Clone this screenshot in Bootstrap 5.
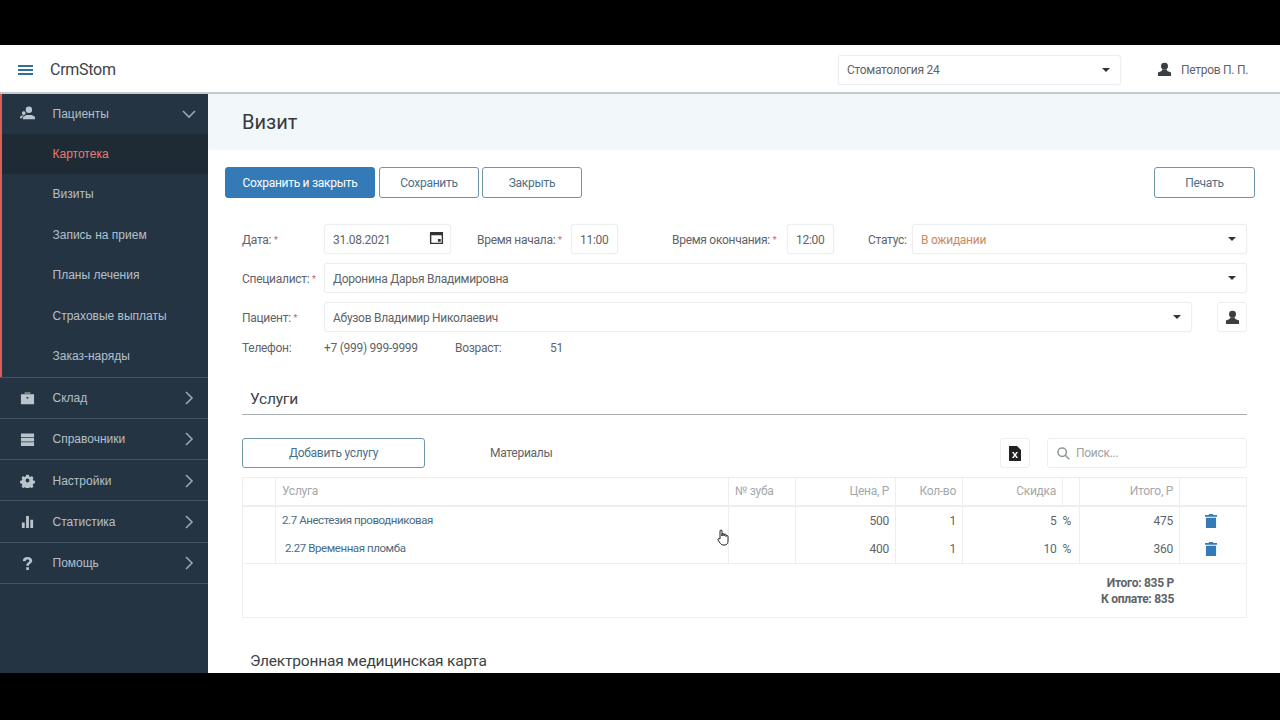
<!DOCTYPE html>
<html lang="ru">
<head>
  <meta charset="UTF-8">
  <meta name="viewport" content="width=device-width, initial-scale=1.0">
  <title>CrmStom - Визит</title>
  <link href="https://cdn.jsdelivr.net/npm/bootstrap@5.3.2/dist/css/bootstrap.min.css" rel="stylesheet">
  <style>
    html, body { height: 720px; overflow: hidden; }
    body { background: #000; font-family: Roboto, "Noto Sans", sans-serif; font-size: 12px; color: #5f6468; letter-spacing: -.28px; }
    .app-frame { position: relative; margin-top: 45px; height: 628px; background: #fff; overflow: hidden; display: flex; flex-direction: column; }
    .top-bar { height: 49px; flex: none; border-bottom: 2px solid #c4c8ca; padding: 2px 32px 0 18px; }
    .burger { width: 15px; height: 10px; border-top: 2px solid #2f6f9f; border-bottom: 2px solid #2f6f9f; position: relative; }
    .burger::after { content: ""; position: absolute; left: 0; right: 0; top: 2px; height: 2px; background: #2f6f9f; }
    .brand-name { margin-left: 17px; font-size: 16px; color: #3c4348; }
    .clinic-select { width: 283px; height: 30px; margin-left: auto; margin-right: 36px; }
    .user-name { width: 67px; margin-left: 9px; color: #5f6468; white-space: nowrap; }
    .work-area { flex: 1; min-height: 0; }
    .side-menu { width: 208px; flex: none; background: #253443; font-family: "Liberation Sans", sans-serif; font-size: 12px; letter-spacing: 0; color: #b4c0ca; }
    .side-group { border-left: 2px solid #dc5e58; }
    .side-item { height: 40.5px; padding-left: 50.5px; }
    .side-item.is-active { background: #1e2a34; color: #ea7b72; }
    .side-top { height: 41.4px; padding: 1px 12px 0 20px; border-bottom: 1px solid #465462; }
    .side-first { height: 42px; border-top: 1px solid #465462; }
    .side-group .side-top { height: 39.5px; border-bottom: 0; padding: 0 12px 0 18px; }
    .side-ico { width: 15px; height: 15px; margin-right: 17.5px; flex: none; fill: #b9c4cd; }
    .side-arrow { margin-left: auto; width: 14px; height: 14px; fill: none; stroke: #9aa7b2; stroke-width: 1.6; }
    .page-body { flex: 1; min-width: 0; }
    .page-title { height: 56px; background: #f2f7fa; padding-left: 34px; font-size: 20px; letter-spacing: 0; color: #33393d; }
    .page-inner { padding: 17px 25px 0 17px; }
    .act-btn { height: 31px; font-size: 12px; letter-spacing: -.28px; padding: 0; border-radius: 3px; border: 1px solid #6f95ac; color: #4a7089; background: #fff; }
    .act-primary { width: 150px; background: #337ab7; border-color: #337ab7; color: #fff; }
    .act-normal { width: 100px; }
    .act-print { width: 101px; }
    .toolbar-close { margin-left: -1px; }
    .form-block { padding: 26px 33px 0 34px; }
    .form-line { margin-bottom: 9px; height: 30px; }
    .form-line label { white-space: nowrap; padding-top: 1px; }
    .form-line .form-control, .form-line .form-select, .clinic-select { font-size: 12px; letter-spacing: -.28px; height: 30px; border: 1px solid #eceeef; border-radius: 3px; padding: 1px 8px 0; color: #5f6468; box-shadow: 0 0 2px #f0f1f2; }
    .form-select, .clinic-select { background-image: url("data:image/svg+xml,%3Csvg xmlns='http://www.w3.org/2000/svg' viewBox='0 0 8 4'%3E%3Cpath fill='%23333' d='M0 0h8L4 4z'/%3E%3C/svg%3E"); background-size: 8px 4px; background-position: right 10px center; }
    .fld-label { width: 82px; flex: none; }
    .req-mark { color: #c9605c; font-size: 9px; vertical-align: 1px; }
    .form-line .date-field { width: 127px; flex: none; padding-right: 6px; }
    .time-field { width: 47px; flex: none; }
    .date-ico { width: 15px; height: 15px; margin-top: -4px; }
    .lbl-start { margin-left: 26px; width: 94px; flex: none; }
    .lbl-end { margin-left: 54px; width: 115px; flex: none; }
    .lbl-status { margin-left: 34px; width: 44px; flex: none; }
    .status-value { color: #c98a5e !important; }
    .person-btn { width: 30px; height: 30px; margin-left: 25px; border: 1px solid #eceeef; border-radius: 3px; background: #fff; padding: 0; flex: none; }
    .info-line { height: 14px; line-height: 14px; }
    .info-phone { width: 131px; }
    .info-age { width: 95px; }
    .sect-head { margin: 33px 33px 0 34px; height: 27px; padding: 2px 0 0 8px; font-size: 15.5px; letter-spacing: -.2px; color: #3c4348; border-bottom: 1px solid #a9adb0; line-height: 18px; }
    .sect-tools { margin: 23px 33px 9px 34px; height: 30px; }
    .add-btn { width: 183px; height: 30px; }
    .mat-link { margin-left: 65px; color: #5f6468; }
    .xls-btn { margin-left: auto; width: 30px; height: 30px; border: 1px solid #eceeef; border-radius: 3px; background: #fff; padding: 0; }
    .search-box { width: 200px; height: 30px; margin-left: 17px; border: 1px solid #eceeef; border-radius: 3px; padding: 0 9px; color: #9da2a5; gap: 6px; }
    .serv-wrap { margin: 0 33px 0 34px; }
    .serv-table { table-layout: fixed; width: 1004px; margin: 0; font-size: 12px; color: #5f6468; border-color: #eceeef; }
    .serv-table th { font-weight: 400; color: #a3a8ab; height: 28px; padding: 0 6px; border: 1px solid #eceeef; border-bottom-width: 2px; vertical-align: middle; }
    .serv-table td { height: 29px; padding: 0 6px; border: 0; border-left: 1px solid #eceeef; border-right: 1px solid #eceeef; vertical-align: middle; }
    .serv-table td.no-right { border-right: 0; }
    .serv-table td.no-left { border-left: 0; padding-left: 0; }
    .serv-table tr.last-row td { border-bottom: 1px solid #eceeef; }
    .serv-table .sum-cell { height: 54px; border: 1px solid #eceeef; padding-right: 72px; font-weight: 700; line-height: 16px; }
    .serv-table td.trash-cell { padding: 0 10px 0 6px; }
    .serv-table td.serv-name { color: #4a6c82; font-size: 11.5px; letter-spacing: -.42px; }
    .serv-indent { padding-left: 3px; }
    .disc-link { color: #4a6c82; }
    .trash-ico { width: 12px; height: 14px; fill: #337ab7; display: block; margin: 0 auto; }
    .emk-head { margin: 34px 0 0 42px; font-size: 15.5px; letter-spacing: -.2px; color: #3c4348; line-height: 18px; }
    .hand-cursor { position: absolute; left: 717px; top: 484px; width: 12px; height: 17px; }
  </style>
</head>
<body>
  <div class="app-frame">
    <header class="top-bar d-flex align-items-center">
      <div class="burger"></div>
      <div class="brand-name">CrmStom</div>
      <select class="form-select clinic-select"><option>Стоматология 24</option></select>
      <svg width="15" height="15" viewBox="0 0 16 16" fill="#3a3f42"><circle cx="8" cy="4.5" r="3.7"/><path d="M5.500 8h5l.5 1.600 4 1.600V15H1v-3.800l4-1.600z"/></svg>
      <span class="user-name">Петров П. П.</span>
    </header>
    <div class="work-area d-flex">
      <nav class="side-menu">
        <div class="side-group">
          <div class="side-top d-flex align-items-center">
            <svg class="side-ico" viewBox="0 0 16 16"><circle cx="9.500" cy="4" r="3.400"/><path d="M3 14v-2l3.500-2.500h6l3.500 2V14z"/><circle cx="4" cy="7.500" r="2"/><path d="M0 13v-1.500l2-1.500h2.500L2 12v1z"/></svg>
            <span>Пациенты</span>
            <svg class="side-arrow" viewBox="0 0 14 14"><path d="M1 4l6 6 6-6"/></svg>
          </div>
          <div class="side-item is-active d-flex align-items-center">Картотека</div>
          <div class="side-item d-flex align-items-center">Визиты</div>
          <div class="side-item d-flex align-items-center">Запись на прием</div>
          <div class="side-item d-flex align-items-center">Планы лечения</div>
          <div class="side-item d-flex align-items-center">Страховые выплаты</div>
          <div class="side-item d-flex align-items-center">Заказ-наряды</div>
        </div>
        <div class="side-top side-first d-flex align-items-center">
          <svg class="side-ico" viewBox="0 0 16 16"><path d="M5 3V1.500h6V3h-1.200v-.4H6.200V3zM1 3.500h14V14H1zM7 6.500v1.500h2V6.500z"/></svg>
          <span>Склад</span>
          <svg class="side-arrow" viewBox="0 0 14 14"><path d="M4 1l6 6-6 6"/></svg>
        </div>
        <div class="side-top d-flex align-items-center">
          <svg class="side-ico" viewBox="0 0 16 16"><path d="M1 1.500h14v4H1zM1 6.500h14v3.500H1zM1 11h14v4H1z"/></svg>
          <span>Справочники</span>
          <svg class="side-arrow" viewBox="0 0 14 14"><path d="M4 1l6 6-6 6"/></svg>
        </div>
        <div class="side-top d-flex align-items-center">
          <svg class="side-ico" viewBox="0 0 16 16"><path fill-rule="evenodd" d="M6.500 1h3l.4 2 1.500.7 1.800-1 2 2-1 1.800.7 1.500 2 .4v3l-2 .4-.7 1.500 1 1.800-2 2-1.800-1-1.500.7-.4 2h-3l-.4-2-1.500-.7-1.800 1-2-2 1-1.800-.7-1.500-2-.4v-3l2-.4.7-1.500-1-1.800 2-2 1.800 1 1.500-.7zM8 5.700a2.300 2.300 0 1 0 0 4.600 2.300 2.300 0 0 0 0-4.600z" transform="translate(.9 .9) scale(.89)"/></svg>
          <span>Настройки</span>
          <svg class="side-arrow" viewBox="0 0 14 14"><path d="M4 1l6 6-6 6"/></svg>
        </div>
        <div class="side-top d-flex align-items-center">
          <svg class="side-ico" viewBox="0 0 16 16"><path d="M2 9h3v6H2zM6.500 2h3v13h-3zM11 6h3v9h-3z"/></svg>
          <span>Статистика</span>
          <svg class="side-arrow" viewBox="0 0 14 14"><path d="M4 1l6 6-6 6"/></svg>
        </div>
        <div class="side-top d-flex align-items-center">
          <svg class="side-ico" viewBox="0 0 16 16"><path d="M3 5.200C3 2.500 5 1 8 1s5 1.500 5 3.900c0 1.800-1 2.600-2.200 3.400-.9.600-1.300 1-1.300 2.200H6.700c0-2 .6-2.800 1.900-3.700.9-.6 1.400-1 1.400-1.800 0-.8-.7-1.300-1.900-1.300-1.300 0-2 .6-2.100 1.800zM6.700 12h2.800v3H6.700z"/></svg>
          <span>Помощь</span>
          <svg class="side-arrow" viewBox="0 0 14 14"><path d="M4 1l6 6-6 6"/></svg>
        </div>
      </nav>
      <main class="page-body">
        <div class="page-title d-flex align-items-center">Визит</div>
        <div class="page-inner d-flex gap-1">
          <button class="btn act-btn act-primary">Сохранить и закрыть</button>
          <button class="btn act-btn act-normal">Сохранить</button>
          <button class="btn act-btn act-normal toolbar-close">Закрыть</button>
          <button class="btn act-btn act-print ms-auto">Печать</button>
        </div>
        <div class="form-block">
          <div class="form-line d-flex align-items-center">
            <label class="fld-label">Дата: <span class="req-mark">*</span></label>
            <div class="form-control date-field d-flex align-items-center justify-content-between">31.08.2021
              <svg class="date-ico" viewBox="0 0 16 16" fill="#333"><path fill-rule="evenodd" d="M1 2h14v13H1zM2.500 5.500V13.500h11V5.500zM9.500 9.500h3v3h-3z"/></svg>
            </div>
            <label class="lbl-start">Время начала: <span class="req-mark">*</span></label>
            <input class="form-control time-field" value="11:00">
            <label class="lbl-end">Время окончания: <span class="req-mark">*</span></label>
            <input class="form-control time-field" value="12:00">
            <label class="lbl-status">Статус:</label>
            <select class="form-select status-value"><option>В ожидании</option></select>
          </div>
          <div class="form-line d-flex align-items-center">
            <label class="fld-label">Специалист: <span class="req-mark">*</span></label>
            <select class="form-select"><option>Доронина Дарья Владимировна</option></select>
          </div>
          <div class="form-line d-flex align-items-center">
            <label class="fld-label">Пациент: <span class="req-mark">*</span></label>
            <select class="form-select"><option>Абузов Владимир Николаевич</option></select>
            <button class="person-btn"><svg width="15" height="15" viewBox="0 0 16 16" fill="#3a3f42"><circle cx="8" cy="4.500" r="3.700"/><path d="M5.500 8h5l.5 1.600 4 1.600V15H1v-3.800l4-1.600z"/></svg></button>
          </div>
          <div class="info-line d-flex">
            <span class="fld-label">Телефон:</span>
            <span class="info-phone">+7 (999) 999-9999</span>
            <span class="info-age">Возраст:</span>
            <span>51</span>
          </div>
        </div>
        <div class="sect-head">Услуги</div>
        <div class="sect-tools d-flex align-items-center">
          <button class="btn act-btn add-btn">Добавить услугу</button>
          <span class="mat-link">Материалы</span>
          <button class="xls-btn"><svg width="12" height="15" viewBox="0 0 12 15"><path fill="#222" d="M0 0h8l4 4v11H0z"/><path fill="#fff" d="M3 6h1.800L6 8l1.200-2H9L7 9l2 3H7.200L6 10l-1.200 2H3l2-3z"/></svg></button>
          <div class="search-box d-flex align-items-center">
            <svg width="13" height="13" viewBox="0 0 13 13" fill="none" stroke="#8f9497" stroke-width="1.500"><circle cx="5.200" cy="5.200" r="4.200"/><path d="M8.300 8.300L12.300 12.300"/></svg>
            <span>Поиск...</span>
          </div>
        </div>
        <div class="serv-wrap">
          <table class="table serv-table">
            <colgroup>
              <col style="width:33px"><col style="width:453px"><col style="width:67px"><col style="width:100px"><col style="width:67px"><col style="width:100px"><col style="width:17px"><col style="width:100px"><col style="width:67px">
            </colgroup>
            <thead>
              <tr>
                <th></th><th>Услуга</th><th>№ зуба</th><th class="text-end">Цена, Р</th><th class="text-end">Кол-во</th><th class="text-end">Скидка</th><th></th><th class="text-end">Итого, Р</th><th></th>
              </tr>
            </thead>
            <tbody>
              <tr>
                <td></td><td class="serv-name">2.7 Анестезия проводниковая</td><td></td><td class="text-end">500</td><td class="text-end">1</td><td class="text-end no-right">5</td><td class="no-left">%</td><td class="text-end">475</td>
                <td class="trash-cell"><svg class="trash-ico" viewBox="0 0 13 15"><path d="M4.500 0h4l.5 1h4v2H0V1h4zM1 4h11v11H1z"/></svg></td>
              </tr>
              <tr class="last-row">
                <td></td><td class="serv-name"><span class="serv-indent">2.27 Временная пломба</span></td><td></td><td class="text-end">400</td><td class="text-end">1</td><td class="text-end no-right disc-link">10</td><td class="no-left">%</td><td class="text-end">360</td>
                <td class="trash-cell"><svg class="trash-ico" viewBox="0 0 13 15"><path d="M4.500 0h4l.5 1h4v2H0V1h4zM1 4h11v11H1z"/></svg></td>
              </tr>
              <tr>
                <td colspan="9" class="sum-cell text-end">Итого: 835 Р<br>К оплате: 835</td>
              </tr>
            </tbody>
          </table>
        </div>
        <div class="emk-head">Электронная медицинская карта</div>
      </main>
    </div>
    <svg class="hand-cursor" viewBox="0 0 12 17" fill="#fff" stroke="#222" stroke-width="1"><path d="M3 9V2a1 1 0 0 1 2 0v5-1.500a1 1 0 0 1 2 0V7v-1a1 1 0 0 1 2 0v1.500a1 1 0 0 1 2 0V12c0 2-1 4-3 4H6c-2 0-3-2-5-5-.5-1 .8-2 2-1z"/></svg>
  </div>
  <script src="https://cdn.jsdelivr.net/npm/bootstrap@5.3.2/dist/js/bootstrap.bundle.min.js"></script>
</body>
</html>
